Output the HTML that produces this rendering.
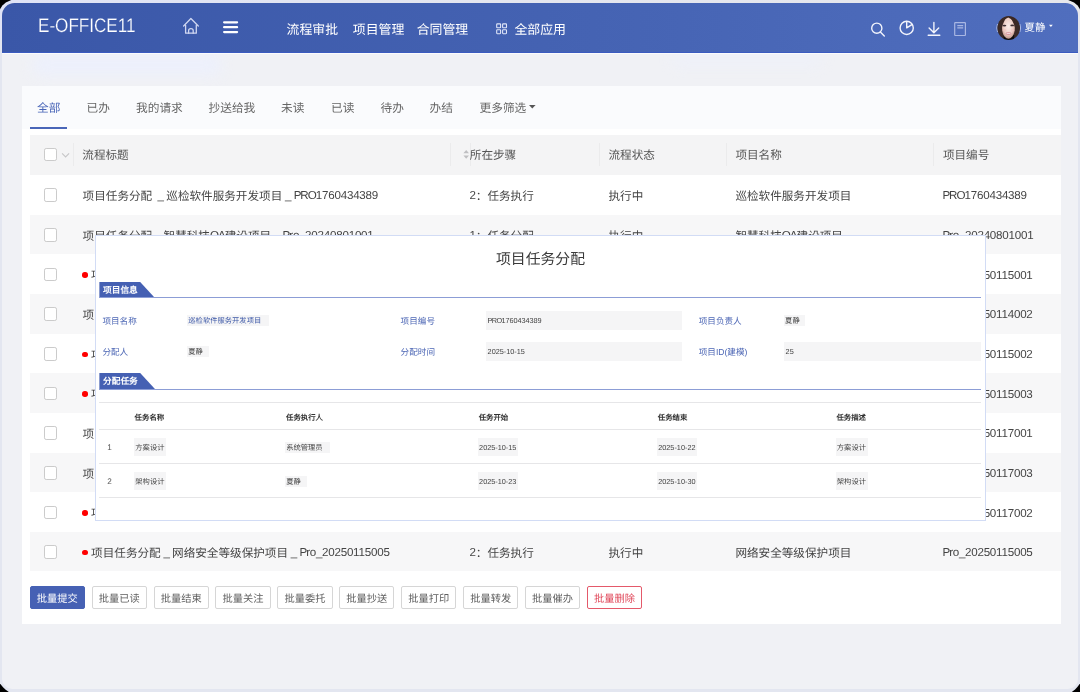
<!DOCTYPE html>
<html lang="zh-CN">
<head>
<meta charset="utf-8">
<title>E-OFFICE11</title>
<style>
*{box-sizing:border-box;margin:0;padding:0}
html,body{width:1080px;height:692px;overflow:hidden;background:#000}
body{font-family:"Liberation Sans",sans-serif;color:#444;position:relative;text-rendering:geometricPrecision}
.abs{position:absolute}
.l{letter-spacing:-.5px}.a{letter-spacing:-1px}.n{letter-spacing:-.22px}
#frame{position:absolute;left:0;top:0;width:1080px;height:692px;overflow:hidden;filter:blur(.38px);clip-path:polygon(0 9.3px,2.4px 5.4px,5.8px 2.4px,11.3px 0,1068.2px 0,1074px 2.4px,1077.6px 5.4px,1080px 9.3px,1080px 683.5px,1077.4px 687px,1075px 689.6px,1071.8px 692px,8.8px 692px,5.4px 689.6px,2.8px 687px,0 683.5px);
 background:linear-gradient(90deg,#dfe3f6 0,#e4e6ef 45%,#e6e7ec 100%)}
#frame2{position:absolute;left:0;top:40px;width:1080px;height:652px;background:#e3e6f0}
#inner{position:absolute;left:2px;top:3px;width:1076px;height:686px;border-radius:12.5px 12.5px 10px 10px;overflow:hidden;background:#f0f1f5}
#hdr{position:absolute;left:0;top:0;width:1076px;height:50px;background:linear-gradient(90deg,#3a57a8 0,#4563b3 55%,#506ebe 100%);border-bottom:1.5px solid #3b5bc0;box-shadow:0 1px 0 rgba(255,255,255,.7)}
#glow,.glow2{position:absolute;left:30px;top:52px;width:190px;height:20px;background:#ecf0ff;filter:blur(7px);border-radius:10px;opacity:.75}
.glow2{left:670px;width:150px;height:12px;top:51px;opacity:.45}
#logo{position:absolute;left:36.2px;top:11.3px;font-size:19.6px;line-height:24px;color:#fff;white-space:nowrap;transform-origin:0 50%;transform:scaleX(.872);-webkit-text-stroke:.22px #3c59aa}
.nav{position:absolute;top:16.7px;font-size:12.9px;line-height:20px;color:#fff;white-space:nowrap}
#uname{position:absolute;left:1022.5px;top:16.3px;font-size:10.4px;line-height:20px;color:#fff;white-space:nowrap}
#panel{position:absolute;left:22px;top:86px;width:1039px;height:537.5px;background:#fff}
#tabbar{position:absolute;left:0;top:0;width:1039px;height:43px;background:#fafbfd}
.tab{position:absolute;top:13.4px;font-size:11.7px;line-height:20px;color:#666;white-space:nowrap}
.tab.on{color:#4a66b8}
#tabline{position:absolute;left:8.3px;top:41px;width:36.6px;height:2.2px;background:#4a66b8}
#thead{position:absolute;left:8px;top:49px;width:1031px;height:40px;background:#f4f4f5}
.row{position:absolute;left:8px;width:1031px;height:39.66px}
.row.g{background:#f7f7f8}
.c{position:absolute;top:0;height:100%;display:flex;align-items:center;font-size:11.6px;white-space:pre;color:#444;padding-top:2.4px}
#thead .c{color:#555;padding-top:0;padding-bottom:1px}
.cb{position:absolute;left:14px;top:50%;margin-top:-6.4px;width:13px;height:13.6px;border:1px solid #cbcbcb;border-radius:2.2px;background:#fff}
#thead .cb{margin-top:-7.4px}
.sep{position:absolute;top:7.5px;width:1px;height:23px;background:#ebebec}
.dot{display:inline-block;width:5.5px;height:5.5px;border-radius:50%;background:#f00;margin-left:-.3px;margin-right:3.3px;position:relative;top:-.2px}
.btn{position:absolute;top:500.2px;width:55.3px;height:23.2px;border:1px solid #d6d6d6;border-radius:2px;background:#fff;color:#606060;font-size:10.25px;line-height:25.8px;text-align:center;white-space:nowrap}
.btn.p{background:#4661b4;border-color:#4661b4;color:#fff}
.btn.d{border-color:#e4596a;color:#e0485a}
#modal{position:absolute;left:95px;top:234.5px;width:891px;height:286px;background:#fff;border:1px solid #d2dcf5}
#modal .ttl{position:absolute;left:0;top:14px;width:889px;text-align:center;font-size:14.85px;line-height:20px;color:#3a3a3a}
.tag{position:absolute;left:3.4px;width:56px;height:16.4px;background:#4560b3;clip-path:polygon(0 0,40.8px 0,56px 100%,0 100%)}
.tagt{position:absolute;left:7px;font-size:8.7px;font-weight:700;color:#fff;line-height:16.4px;white-space:nowrap}
.sline{position:absolute;left:3.4px;width:881.6px;height:1.3px;background:#8c9dd6}
.lb{position:absolute;font-size:8.6px;line-height:14px;color:#4d67b5;white-space:nowrap}
.fbox{position:absolute;background:#f5f5f6}
.val{position:absolute;font-size:7.3px;line-height:12px;color:#444;white-space:nowrap}
.val.b{color:#3f5aa8}
.val .a{letter-spacing:-.6px}.val .n{letter-spacing:-.08px}
.tl{position:absolute;left:3.4px;width:881.6px;height:1.2px;background:#e6e6e8}
.th{position:absolute;font-size:7.4px;font-weight:700;line-height:12px;color:#333;white-space:nowrap}
.no{position:absolute;font-size:8.2px;line-height:12px;color:#555}
</style>
</head>
<body>
<div id="frame"><div id="frame2"></div>
<div id="inner">
 <div id="glow"></div><div class="glow2"></div>
 <div id="hdr">
  <div id="logo">E-OFFICE11</div>
  <div class="nav" style="left:284.6px">流程审批</div>
  <div class="nav" style="left:350.8px">项目管理</div>
  <div class="nav" style="left:414.7px">合同管理</div>
  <div class="nav" style="left:512.4px">全部应用</div>
  <div id="uname">夏静</div>

  <svg class="abs" style="left:0;top:0" width="1076" height="50" viewBox="2 3 1076 50" fill="none">
   <g stroke="#cfd6f1" stroke-width="1.3" stroke-linecap="round" stroke-linejoin="round">
    <path d="M183.6 26 L190.9 18.5 L198.3 26"/>
    <path d="M185.6 25.2 V33.2 H196.3 V25.2"/>
    <path d="M188.6 33.2 V30.6 Q188.6 28.6 190.9 28.6 Q193.2 28.6 193.2 30.6 V33.2"/>
   </g>
   <g stroke="#fff" stroke-width="2.2" stroke-linecap="round">
    <path d="M224.1 22.3 H237.1 M224.1 27.2 H237.1 M224.1 32.1 H237.1"/>
   </g>
   <g stroke="#dfe5f8" stroke-width="1.1">
    <rect x="496.7" y="23.9" width="3.9" height="3.9" rx=".6"/><rect x="502.6" y="23.9" width="3.9" height="3.9" rx=".6"/>
    <rect x="496.7" y="29.8" width="3.9" height="3.9" rx=".6"/><rect x="502.6" y="29.8" width="3.9" height="3.9" rx=".6"/>
   </g>
   <g stroke="#f2f4fc" stroke-width="1.4" stroke-linecap="round" stroke-linejoin="round">
    <circle cx="876.8" cy="28.2" r="5.1"/><path d="M880.6 32.2 L884.3 35.9"/>
    <circle cx="906.7" cy="27.9" r="6.6"/><path d="M906.7 21.4 V27.9 L912.3 24.4"/>
    <path d="M933.9 22.5 V32.6 M929.1 28 L933.9 32.8 L938.7 28 M928.2 35.2 H939.8"/>
   </g>
   <g stroke="#a9b7e3" stroke-width="1.2">
    <rect x="954.7" y="22.7" width="10.7" height="12.8" rx=".5"/><path d="M957.3 25.7 H963.2 M957.3 27.9 H963.2"/>
   </g>
   <path d="M1049 24.7 H1052.8 L1050.9 26.9 Z" fill="#fff"/>
   <defs>
    <clipPath id="avc"><ellipse cx="1008.7" cy="28" rx="11.3" ry="12.1"/></clipPath>
    <radialGradient id="face" cx=".5" cy=".42" r=".6"><stop offset="0" stop-color="#fbeeea"/><stop offset=".62" stop-color="#edcfc6"/><stop offset="1" stop-color="#b88c7f"/></radialGradient>
    <filter id="avb" x="-20%" y="-20%" width="140%" height="140%"><feGaussianBlur stdDeviation=".45"/></filter>
   </defs>
   <path d="M997.5 24 A11.9 11.9 0 0 0 997.5 32 M1019.9 24 A11.9 11.9 0 0 1 1019.9 32" stroke="#c3cef0" stroke-width="1" fill="none" opacity=".8"/>
   <g clip-path="url(#avc)"><g filter="url(#avb)">
    <rect x="995" y="14" width="28" height="28" fill="#3b2925"/>
    <path d="M1003.5 35 L1004 44 H1014 L1014.2 35Z" fill="#0a0808"/>
    <path d="M1002 27 Q1001.8 20 1008.2 17.6 Q1014.6 20 1014.9 27 Q1015 33 1012.4 36.4 Q1010.4 38.8 1008.5 38.8 Q1006.4 38.8 1004.4 36.4 Q1001.9 33 1002 27Z" fill="url(#face)"/>
    <path d="M1008.3 16.6 Q1003.6 19 1002.4 27.5 Q1001.5 22 1003 18.5 Q1005.5 15.6 1008.3 16.6Z M1008.3 16.6 Q1013 19 1014.6 27.5 Q1015.6 22 1014 18.5 Q1011.3 15.6 1008.3 16.6Z" fill="#3b2925"/>
    <ellipse cx="1004.4" cy="25.6" rx="1.9" ry=".85" fill="#3d2f33"/><ellipse cx="1012.2" cy="25.4" rx="1.9" ry=".85" fill="#3d2f33"/>
    <ellipse cx="1008.5" cy="33.6" rx="3" ry="1.3" fill="#d9919c"/><rect x="1006.6" y="33" width="3.8" height=".8" fill="#f4e6e6"/>
    <ellipse cx="1004.5" cy="30.3" rx="1.6" ry="1.3" fill="#f0c4c0" opacity=".7"/><ellipse cx="1012.6" cy="30.3" rx="1.6" ry="1.3" fill="#f0c4c0" opacity=".7"/>
   </g></g>
  </svg>

 </div>
</div>
<div id="panel">
 <div id="tabbar">
  <div class="tab on" style="left:15px">全部</div>
  <div class="tab" style="left:64.5px">已办</div>
  <div class="tab" style="left:114px">我的请求</div>
  <div class="tab" style="left:186.5px">抄送给我</div>
  <div class="tab" style="left:259px">未读</div>
  <div class="tab" style="left:309px">已读</div>
  <div class="tab" style="left:358.5px">待办</div>
  <div class="tab" style="left:407.5px">办结</div>
  <div class="tab" style="left:457.5px">更多筛选<svg style="position:absolute;left:49.4px;top:5.6px" width="7" height="4" viewBox="0 0 7 4"><path d="M0 0H6.6L3.3 3.6Z" fill="#555"/></svg></div>
  <div id="tabline"></div>
 </div>
 <div id="thead">
  <svg class="abs" style="left:0;top:0" width="1031" height="40" viewBox="30 135 1031 40" fill="none">
   <path d="M62.1 153.4 L65.6 157 L69.1 153.4" stroke="#c6c6c8" stroke-width="1.1"/>
   <path d="M463.4 153.2 L466.2 149.9 L469 153.2 Z M463.4 155.4 L466.2 158.7 L469 155.4 Z" fill="#bfbfc2"/>
  </svg>

  <div class="cb"></div>
  <div class="sep" style="left:43px"></div>
  <div class="sep" style="left:420px"></div>
  <div class="sep" style="left:439.5px"></div>
  <div class="sep" style="left:568.6px"></div>
  <div class="sep" style="left:695.6px"></div>
  <div class="sep" style="left:902.8px"></div>
  <div class="c" style="left:52.3px">流程标题</div>
  <div class="c" style="left:439.8px">所在步骤</div>
  <div class="c" style="left:578.5px">流程状态</div>
  <div class="c" style="left:705.4px">项目名称</div>
  <div class="c" style="left:912.9px">项目编号</div>
 </div>
 <div class="row" style="top:88.90px"><div class="cb"></div><div class="c" style="left:52.6px">项目任务分配<span class="l">  _ </span>巡检软件服务开发项目<span class="l"> _ </span><span class="a">PRO</span><span class="n">1760434389</span></div><div class="c" style="left:439.6px"><span class="n">2</span>：任务执行</div><div class="c" style="left:578.5px">执行中</div><div class="c" style="left:705.4px">巡检软件服务开发项目</div><div class="c" style="left:912.4px"><span class="a">PRO</span><span class="n">1760434389</span></div></div>
 <div class="row g" style="top:128.56px"><div class="cb"></div><div class="c" style="left:52.6px">项目任务分配<span class="l"> _ </span>智慧科技<span class="a">OA</span>建设项目<span class="l"> _ </span><span class="a">P</span><span class="n">ro</span><span class="l">_</span><span class="n">20240801001</span></div><div class="c" style="left:439.6px"><span class="n">1</span>：任务分配</div><div class="c" style="left:578.5px">执行中</div><div class="c" style="left:705.4px">智慧科技<span class="a">OA</span>建设项目</div><div class="c" style="left:912.4px"><span class="a">P</span><span class="n">ro</span><span class="l">_</span><span class="n">20240801001</span></div></div>
 <div class="row" style="top:168.22px"><div class="cb"></div><div class="c" style="left:52.6px"><span class="dot"></span>项目任务分配<span class="l"> _ </span>数据中心机房改造项目<span class="l"> _ </span><span class="a">P</span><span class="n">ro</span><span class="l">_</span><span class="n">20250115001</span></div><div class="c" style="left:439.6px"><span class="n">2</span>：任务执行</div><div class="c" style="left:578.5px">执行中</div><div class="c" style="left:705.4px">数据中心机房改造项目</div><div class="c" style="left:912.4px"><span class="a">P</span><span class="n">ro</span><span class="l">_</span><span class="n">20250115001</span></div></div>
 <div class="row g" style="top:207.88px"><div class="cb"></div><div class="c" style="left:52.6px">项目任务分配<span class="l"> _ </span>移动办公平台升级项目<span class="l"> _ </span><span class="a">P</span><span class="n">ro</span><span class="l">_</span><span class="n">20250114002</span></div><div class="c" style="left:439.6px"><span class="n">2</span>：任务执行</div><div class="c" style="left:578.5px">执行中</div><div class="c" style="left:705.4px">移动办公平台升级项目</div><div class="c" style="left:912.4px"><span class="a">P</span><span class="n">ro</span><span class="l">_</span><span class="n">20250114002</span></div></div>
 <div class="row" style="top:247.54px"><div class="cb"></div><div class="c" style="left:52.6px"><span class="dot"></span>项目任务分配<span class="l"> _ </span>视频会议系统建设项目<span class="l"> _ </span><span class="a">P</span><span class="n">ro</span><span class="l">_</span><span class="n">20250115002</span></div><div class="c" style="left:439.6px"><span class="n">2</span>：任务执行</div><div class="c" style="left:578.5px">执行中</div><div class="c" style="left:705.4px">视频会议系统建设项目</div><div class="c" style="left:912.4px"><span class="a">P</span><span class="n">ro</span><span class="l">_</span><span class="n">20250115002</span></div></div>
 <div class="row g" style="top:287.20px"><div class="cb"></div><div class="c" style="left:52.6px"><span class="dot"></span>项目任务分配<span class="l"> _ </span>财务共享中心实施项目<span class="l"> _ </span><span class="a">P</span><span class="n">ro</span><span class="l">_</span><span class="n">20250115003</span></div><div class="c" style="left:439.6px"><span class="n">2</span>：任务执行</div><div class="c" style="left:578.5px">执行中</div><div class="c" style="left:705.4px">财务共享中心实施项目</div><div class="c" style="left:912.4px"><span class="a">P</span><span class="n">ro</span><span class="l">_</span><span class="n">20250115003</span></div></div>
 <div class="row" style="top:326.86px"><div class="cb"></div><div class="c" style="left:52.6px">项目任务分配<span class="l"> _ </span>人力资源系统集成项目<span class="l"> _ </span><span class="a">P</span><span class="n">ro</span><span class="l">_</span><span class="n">20250117001</span></div><div class="c" style="left:439.6px"><span class="n">1</span>：任务分配</div><div class="c" style="left:578.5px">执行中</div><div class="c" style="left:705.4px">人力资源系统集成项目</div><div class="c" style="left:912.4px"><span class="a">P</span><span class="n">ro</span><span class="l">_</span><span class="n">20250117001</span></div></div>
 <div class="row g" style="top:366.52px"><div class="cb"></div><div class="c" style="left:52.6px">项目任务分配<span class="l"> _ </span>档案数字化管理项目<span class="l"> _ </span><span class="a">P</span><span class="n">ro</span><span class="l">_</span><span class="n">20250117003</span></div><div class="c" style="left:439.6px"><span class="n">1</span>：任务分配</div><div class="c" style="left:578.5px">执行中</div><div class="c" style="left:705.4px">档案数字化管理项目</div><div class="c" style="left:912.4px"><span class="a">P</span><span class="n">ro</span><span class="l">_</span><span class="n">20250117003</span></div></div>
 <div class="row" style="top:406.18px"><div class="cb"></div><div class="c" style="left:52.6px"><span class="dot"></span>项目任务分配<span class="l"> _ </span>智能客服平台开发项目<span class="l"> _ </span><span class="a">P</span><span class="n">ro</span><span class="l">_</span><span class="n">20250117002</span></div><div class="c" style="left:439.6px"><span class="n">2</span>：任务执行</div><div class="c" style="left:578.5px">执行中</div><div class="c" style="left:705.4px">智能客服平台开发项目</div><div class="c" style="left:912.4px"><span class="a">P</span><span class="n">ro</span><span class="l">_</span><span class="n">20250117002</span></div></div>
 <div class="row g" style="top:445.84px"><div class="cb"></div><div class="c" style="left:52.6px"><span class="dot"></span>项目任务分配<span class="l"> _ </span>网络安全等级保护项目<span class="l"> _ </span><span class="a">P</span><span class="n">ro</span><span class="l">_</span><span class="n">20250115005</span></div><div class="c" style="left:439.6px"><span class="n">2</span>：任务执行</div><div class="c" style="left:578.5px">执行中</div><div class="c" style="left:705.4px">网络安全等级保护项目</div><div class="c" style="left:912.4px"><span class="a">P</span><span class="n">ro</span><span class="l">_</span><span class="n">20250115005</span></div></div>
 <div class="btn p" style="left:7.7px">批量提交</div>
 <div class="btn" style="left:69.6px">批量已读</div>
 <div class="btn" style="left:131.5px">批量结束</div>
 <div class="btn" style="left:193.4px">批量关注</div>
 <div class="btn" style="left:255.3px">批量委托</div>
 <div class="btn" style="left:317.2px">批量抄送</div>
 <div class="btn" style="left:379.1px">批量打印</div>
 <div class="btn" style="left:441.0px">批量转发</div>
 <div class="btn" style="left:502.9px">批量催办</div>
 <div class="btn d" style="left:564.8px">批量删除</div>
</div>
<div id="modal">
<div class="ttl">项目任务分配</div>
<div class="tag" style="top:46.5px"></div><div class="tagt" style="top:46.5px">项目信息</div>
<div class="sline" style="top:61.7px"></div>
<div class="lb" style="left:6.4px;top:78.3px">项目名称</div>
<div class="fbox" style="left:91.1px;top:79.8px;width:81.7px;height:11.1px"></div>
<div class="val b" style="left:92.3px;top:79.3px">巡检软件服务开发项目</div>
<div class="lb" style="left:304.6px;top:78.3px">项目编号</div>
<div class="fbox" style="left:389.8px;top:75.6px;width:196.7px;height:18.6px"></div>
<div class="val" style="left:391.6px;top:79.1px"><span class="a">PRO</span><span class="n">1760434389</span></div>
<div class="lb" style="left:602.7px;top:78.3px">项目负责人</div>
<div class="fbox" style="left:687.9px;top:79.8px;width:21.4px;height:11.1px"></div>
<div class="val" style="left:689.1px;top:79.3px">夏静</div>
<div class="lb" style="left:6.4px;top:109.5px">分配人</div>
<div class="fbox" style="left:91.1px;top:110.9px;width:22.2px;height:11.1px"></div>
<div class="val" style="left:92.3px;top:110.5px">夏静</div>
<div class="lb" style="left:304.6px;top:109.5px">分配时间</div>
<div class="fbox" style="left:389.8px;top:106.7px;width:196.7px;height:18.4px"></div>
<div class="val" style="left:391.6px;top:110.1px">2025-10-15</div>
<div class="lb" style="left:602.7px;top:109.5px">项目ID(建模)</div>
<div class="fbox" style="left:687.9px;top:106.7px;width:197.2px;height:18.4px"></div>
<div class="val" style="left:689.6px;top:110.1px">25</div>
<div class="tag" style="top:137.5px"></div><div class="tagt" style="top:137.5px">分配任务</div>
<div class="sline" style="top:153.0px"></div>
<div class="tl" style="top:166.7px"></div>
<div class="tl" style="top:193.7px"></div>
<div class="tl" style="top:227.3px"></div>
<div class="tl" style="top:261.2px"></div>
<div class="th" style="left:38.6px;top:176.0px">任务名称</div>
<div class="th" style="left:190.0px;top:176.0px">任务执行人</div>
<div class="th" style="left:382.7px;top:176.0px">任务开始</div>
<div class="th" style="left:561.8px;top:176.0px">任务结束</div>
<div class="th" style="left:740.4px;top:176.0px">任务描述</div>
<div class="no" style="left:11.2px;top:206.3px">1</div>
<div class="fbox" style="left:38.3px;top:202.1px;width:31.4px;height:18.2px"></div>
<div class="val" style="left:39.3px;top:206.0px">方案设计</div>
<div class="fbox" style="left:189.1px;top:206.4px;width:44.5px;height:10.8px"></div>
<div class="val" style="left:190.2px;top:206.0px">系统管理员</div>
<div class="fbox" style="left:381.8px;top:202.1px;width:40.4px;height:18.2px"></div>
<div class="val" style="left:383.1px;top:206.0px">2025-10-15</div>
<div class="fbox" style="left:560.9px;top:202.1px;width:40.1px;height:18.2px"></div>
<div class="val" style="left:562.2px;top:206.0px">2025-10-22</div>
<div class="fbox" style="left:739.6px;top:202.1px;width:32.4px;height:18.2px"></div>
<div class="val" style="left:740.8px;top:206.0px">方案设计</div>
<div class="no" style="left:11.2px;top:240.4px">2</div>
<div class="fbox" style="left:38.3px;top:236.2px;width:31.4px;height:18.2px"></div>
<div class="val" style="left:39.3px;top:240.1px">架构设计</div>
<div class="fbox" style="left:189.1px;top:240.5px;width:22.0px;height:10.8px"></div>
<div class="val" style="left:190.2px;top:240.1px">夏静</div>
<div class="fbox" style="left:381.8px;top:236.2px;width:40.4px;height:18.2px"></div>
<div class="val" style="left:383.1px;top:240.1px">2025-10-23</div>
<div class="fbox" style="left:560.9px;top:236.2px;width:40.1px;height:18.2px"></div>
<div class="val" style="left:562.2px;top:240.1px">2025-10-30</div>
<div class="fbox" style="left:739.6px;top:236.2px;width:32.4px;height:18.2px"></div>
<div class="val" style="left:740.8px;top:240.1px">架构设计</div>
</div>
</div>
</body>
</html>
